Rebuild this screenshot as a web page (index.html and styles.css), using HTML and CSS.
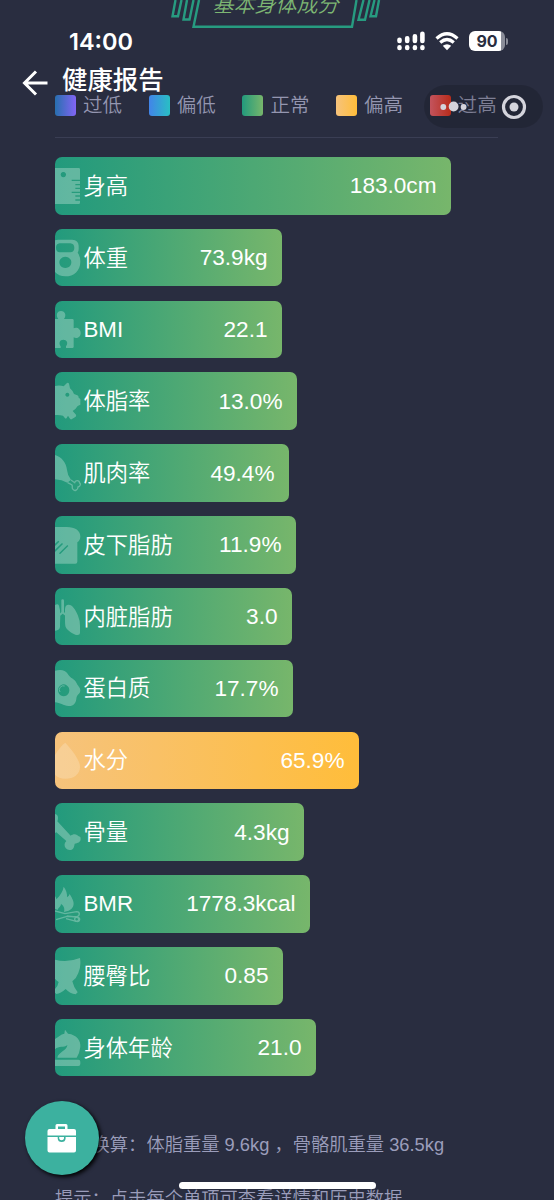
FILE: index.html
```html
<!DOCTYPE html>
<html lang="zh-CN">
<head>
    <meta charset="UTF-8">
    <meta name="viewport" content="width=device-width, initial-scale=1.0">
    <title>健康报告</title>
    <link rel="stylesheet" href="styles.css">
</head>
<body>

    <!-- Section banner -->
    <div class="banner">
        <svg class="banner-frame" width="212" height="30" viewBox="170 0 212 30">
            <path d="M200 0L194.500 26.800H353L357.500 0M176.500 0L173.500 16.300H179L182.500 0M188 0L184.500 19.500H190.500L194.500 0M364.500 0L359.500 19.800H366L370.500 0M375.500 0L371.500 16.300H377L380 0"/>
        </svg>
        <span class="banner-title">基本身体成分</span>
    </div>

    <!-- Legend -->
    <div class="legend">
        <div class="legend-item"><i class="swatch too-low"></i><span>过低</span></div>
        <div class="legend-item"><i class="swatch low"></i><span>偏低</span></div>
        <div class="legend-item"><i class="swatch normal"></i><span>正常</span></div>
        <div class="legend-item"><i class="swatch high"></i><span>偏高</span></div>
        <div class="legend-item"><i class="swatch too-high"></i><span>过高</span></div>
    </div>

    <!-- Body composition bars -->
    <div class="bars">
        <div class="bar normal" style="width: 396px">
            <svg class="icon" viewBox="0 0 78 114"><path fill-rule="evenodd" d="M0 3H71Q75 3 75 7V38H50V42H75V51H61V55H75V62H61V66H75V74H50V78H75V85H61V89H75V97H61V101H75V107Q75 111 71 111H0ZM25 15a8 8 0 1 0 .1 0Z"/></svg>
            <span class="label">身高</span><span class="value">183.0cm</span>
        </div>
        <div class="bar normal" style="width: 227px">
            <svg class="icon" viewBox="0 0 78 114"><path fill-rule="evenodd" d="M0 4Q3 2 10 2H52Q70 3 71 20V30Q71 36 68 41Q76 52 76 68C76 95 57 112 31 112C18 112 7 107 0 99ZM14 13Q3 14 3 26Q3 39 14 40H46Q58 39 58 27Q58 14 46 13ZM31 53A18 17 0 1 0 31.100 53Z"/></svg>
            <span class="label">体重</span><span class="value">73.9kg</span>
        </div>
        <div class="bar normal" style="width: 227px">
            <svg class="icon" viewBox="0 0 78 114"><path d="M0 27H10C2 17 5 3 18 3C31 3 35 17 27 27H52Q56 27 56 31V55C65 50 77 56 77 69C77 82 65 87 56 82V110Q56 114 52 114H33V109C41 98 35 89 25 89C14 89 10 100 17 109V114H0Z"/></svg>
            <span class="label latin">BMI</span><span class="value">22.1</span>
        </div>
        <div class="bar normal" style="width: 242px">
            <svg class="icon" viewBox="0 0 78 114"><path fill-rule="evenodd" d="M0 12C9 9 19 10 26 13L36 3Q40 1 42 5L45 19Q55 28 57 36L67 40Q71 41 71 47L76 51V68L68 72Q62 82 53 87L63 98Q65 102 61 105L51 111Q47 114 44 109L39 101L35 108Q32 112 29 107L24 101Q14 98 0 99ZM37 32a6 6 0 1 0 .1 0Z"/></svg>
            <span class="label">体脂率</span><span class="value">13.0%</span>
        </div>
        <div class="bar normal" style="width: 234px">
            <svg class="icon" viewBox="0 0 78 114"><path d="M0 3C21 9 34 28 36 48Q37 63 48 77L37 86Q21 77 0 76Z"/><path class="outline" d="M48 78L59 86C61 77 73 78 74 87C78 88 77 97 69 99C69 109 58 113 53 105C49 99 56 93 48 91L38 86"/></svg>
            <span class="label">肌肉率</span><span class="value">49.4%</span>
        </div>
        <div class="bar normal" style="width: 241px">
            <svg class="icon" viewBox="0 0 78 114"><path fill-rule="evenodd" d="M0 3H35C61 3 76 14 76 31Q76 43 67 49V107Q67 113 61 113H0V78L24 54L21 51L0 71V60L13 47L10 44L0 53ZM12 82L15 85L40 60L37 57Z"/></svg>
            <span class="label">皮下脂肪</span><span class="value">11.9%</span>
        </div>
        <div class="bar normal" style="width: 237px">
            <svg class="icon" viewBox="0 0 78 114"><path d="M0 21Q9 16 12 23Q16 36 16 50L15 80Q16 92 10 95Q4 98 0 98ZM19 7Q19 4 23 4Q27 4 27 8V42L32 47V54L23 47L15 54V47L19 42ZM30 36Q30 22 37 21C48 16 61 32 69 53Q75 67 75 84V105Q75 112 65 111C56 110 37 98 32 87Q30 82 30 65Z"/></svg>
            <span class="label">内脏脂肪</span><span class="value">3.0</span>
        </div>
        <div class="bar normal" style="width: 238px">
            <svg class="icon" viewBox="0 0 78 114"><path fill-rule="evenodd" d="M0 5C17 0 32 3 38 14C45 28 60 29 65 43C68 51 76 55 76 64C76 76 65 76 64 89C63 103 54 112 41 111C24 110 16 101 0 100ZM26 46A17 18 0 1 0 26.100 46Z"/><path class="thin" d="M15 69A12 12 0 0 1 29 51"/></svg>
            <span class="label">蛋白质</span><span class="value">17.7%</span>
        </div>
        <div class="bar high" style="width: 304px">
            <svg class="icon faint" viewBox="0 0 78 114"><path d="M31 5C43 18 75 55 75 77C75 99 57 113 31 113C18 113 7 109 0 101V42C10 25 21 12 31 5Z"/></svg>
            <span class="label">水分</span><span class="value">65.9%</span>
        </div>
        <div class="bar normal" style="width: 249px">
            <svg class="icon" viewBox="0 0 78 114"><path d="M0 3Q9 5 9 15Q9 20 7 25L47 68C53 63 61 62 66 66Q69 69 76 72C80 87 69 90 59 92C57 105 54 111 44 111C31 110 26 100 30 89L34 84L4 58L0 60Z"/></svg>
            <span class="label">骨量</span><span class="value">4.3kg</span>
        </div>
        <div class="bar normal" style="width: 255px">
            <svg class="icon" viewBox="0 0 78 114"><path d="M26 5Q37 19 36 37Q43 33 44 27C54 43 59 54 54 65Q51 72 41 77L27 81C31 66 23 61 18 56C18 66 9 67 8 75L0 71V33Q4 38 4 43C17 29 24 19 26 5Z"/><path class="outline" d="M0 78L30 86L65 80Q73 80 73 87Q73 93 66 95L36 94L3 104M35 93L63 96Q74 97 74 103Q74 111 64 109L33 101"/><circle class="outline" cx="65" cy="103" r="6"/></svg>
            <span class="label latin">BMR</span><span class="value">1778.3kcal</span>
        </div>
        <div class="bar normal" style="width: 228px">
            <svg class="icon" viewBox="0 0 78 114"><path d="M0 8Q37 18 75 3Q79 28 70 48Q65 63 52 73Q56 91 68 106L62 112Q45 110 32 96Q17 109 4 111L0 107V96Q9 87 11 75Q4 71 0 65Z"/></svg>
            <span class="label">腰臀比</span><span class="value">0.85</span>
        </div>
        <div class="bar normal" style="width: 261px">
            <svg class="icon" viewBox="0 0 78 114"><path d="M30 2L39 14C66 17 78 36 76 54Q74 72 65 86H7C9 70 37 64 37 48C26 57 12 49 0 61V30C10 24 17 16 28 14ZM0 92H70Q76 92 76 98V105Q76 111 70 111H0Z"/></svg>
            <span class="label">身体年龄</span><span class="value">21.0</span>
        </div>
    </div>

    <!-- Notes -->
    <div class="notes">
        <p>重量换算：体脂重量 9.6kg ，骨骼肌重量 36.5kg</p>
        <p>提示：点击每个单项可查看详情和历史数据</p>
    </div>

    <!-- Status bar and page title stay over the scrolled content -->
    <div class="top">
        <div class="status">
            <span class="time">14:00</span>
            <div class="status-icons">
                <svg width="28" height="20" viewBox="0 0 28 20">
                    <path d="M2.500 8.800V10M10.200 7.200V10M17.900 5.200V10M25.400 2.800V10M2.500 16.400V16.900M10.200 16.400V16.900M17.900 16.400V16.900M25.400 16.400V16.900" fill="none" stroke="#fff" stroke-width="4.600" stroke-linecap="round"/>
                </svg>
                <svg class="wifi" width="24" height="19" viewBox="0 0 24 19">
                    <path d="M1.500 6.500Q12-3 22.500 6.500M5.200 10.500Q12 4.500 18.800 10.500" fill="none" stroke="#fff" stroke-width="3.200"/>
                    <path d="M12 18.200L7.800 13.800Q12 10.500 16.200 13.800Z" fill="#fff"/>
                </svg>
                <div class="battery"><span>90</span></div>
            </div>
        </div>
        <div class="nav">
            <svg width="26" height="26" viewBox="0 0 26 26"><path d="M14 1.500L2.500 13L14 24.500M2.500 13H25.500" fill="none" stroke="#fff" stroke-width="3"/></svg>
            <h1>健康报告</h1>
        </div>
    </div>

    <div class="capsule">
        <svg width="119" height="43" viewBox="0 0 119 43">
            <g fill="#d4d4dc"><circle cx="19.300" cy="22" r="2.900"/><circle cx="29.600" cy="21.500" r="4.900"/><circle cx="39.600" cy="22" r="2.900"/><circle cx="90" cy="22" r="4.500"/></g>
            <circle cx="90" cy="22" r="10.500" fill="none" stroke="#d4d4dc" stroke-width="3.200"/>
        </svg>
    </div>

    <div class="fab">
        <svg width="30" height="30" viewBox="0 0 30 30">
            <path fill="#fff" fill-rule="evenodd" d="M8.500 6V2.500Q8.500 1 10 1H19Q20.500 1 20.500 2.500V6H27Q29 6 29 8V12.500H.5V8Q.5 6 2.500 6ZM11 6H18V3.500H11ZM.5 14H10.700V15.500Q11 19 14.700 19Q18.300 19 18.600 15.500V14H29V27.500Q29 29.500 27 29.500H2.500Q.5 29.500 .5 27.500ZM12.200 14H17V15.500Q16.700 17.300 14.600 17.300Q12.400 17.300 12.200 15.500Z"/>
        </svg>
    </div>

    <div class="home-indicator"></div>

</body>
</html>
```
FILE: styles.css
```css
/* Health report, dark theme */
* {
    box-sizing: border-box;
}

html {
    background-color: #292d40;
    overflow: hidden;
}

body {
    position: relative;
    height: 1200px;
    margin: 0;
    overflow: hidden;
    background-color: #292d40;
    font-family: "Liberation Sans", "Noto Sans CJK SC", sans-serif;
    font-weight: 350;
}

/* Banner */
.banner {
    display: grid;
    justify-content: center;
    height: 30px;
}

.banner-frame,
.banner-title {
    grid-area: 1 / 1;
}

.banner-frame {
    margin: 0 2px 0 -2px;
    fill: none;
    stroke: #279b80;
    stroke-width: 2.4;
}

.banner-title {
    justify-self: center;
    margin: -10px 3px 0 0;
    font-size: 21px;
    line-height: 30px;
    font-style: italic;
    color: #7db673;
}

/* Legend */
.legend {
    display: flex;
    height: 108px;
    margin: 0 56px 0 55px;
    padding-top: 65px;
    border-bottom: 1px solid #3a3e54;
}

.legend-item {
    display: flex;
    flex: 0 0 93.7px;
    align-items: center;
    gap: 7px;
    height: 21px;
    font-size: 19.5px;
    line-height: 21px;
    color: #9496b0;
    white-space: nowrap;
}

.swatch {
    width: 21px;
    height: 21px;
    border-radius: 3px;
}

.too-low {
    background: linear-gradient(90deg, #276fae, #8265f5);
}

.low {
    background: linear-gradient(90deg, #4284e8, #29bfc4);
}

.normal {
    background: linear-gradient(90deg, #229a7d, #77b66b);
}

.high {
    background: linear-gradient(90deg, #f6c37c, #ffbd3a);
}

.too-high {
    background: linear-gradient(90deg, #e5636e, #d93420);
}

/* Bars */
.bars {
    display: flex;
    flex-direction: column;
    gap: 14.23px;
    padding: 19px 0 0 55px;
}

.bar {
    display: flex;
    align-items: center;
    height: 57.6px;
    padding-right: 14.5px;
    border-radius: 7px;
    font-size: 22.3px;
    color: #fff;
    white-space: nowrap;
}

.icon {
    width: 26px;
    height: 38px;
    margin-right: 2.5px;
    fill: #fff;
    opacity: 0.28;
}

.icon.faint {
    opacity: 0.2;
}

.icon .outline,
.icon .thin {
    fill: none;
    stroke: #fff;
    stroke-width: 4;
}

.icon .thin {
    stroke-width: 3;
}

.label {
    padding-bottom: 4px;
}

.label.latin {
    padding: 1px 0 0;
}

.value {
    margin-left: auto;
    padding-top: 1px;
    font-size: 22.6px;
}

/* Notes */
.notes {
    padding: 55px 0 0 55px;
    font-size: 18.3px;
    line-height: 28px;
    color: #9b9dbb;
    white-space: nowrap;
}

.notes p {
    margin: 0 0 26px;
}

/* Status bar and title */
.top {
    position: absolute;
    top: 0;
    left: 0;
    width: 100%;
    padding-top: 27px;
    color: #fff;
}

.status {
    display: flex;
    align-items: center;
    justify-content: space-between;
    height: 28px;
    padding: 0 45px 0 69px;
}

.time {
    font-family: Inter, sans-serif;
    font-size: 23.5px;
    font-weight: 600;
}

.status-icons {
    display: flex;
    align-items: center;
}

.wifi {
    margin: 0 10px;
}

.battery {
    display: flex;
    align-items: center;
    width: 40px;
}

.battery span {
    width: 36px;
    height: 20px;
    border-radius: 6px;
    background: linear-gradient(90deg, #fff 90%, #898c98 90%);
    font-family: Inter, sans-serif;
    font-size: 16px;
    font-weight: 700;
    line-height: 20px;
    text-align: center;
    color: #292d40;
}

.battery::after {
    content: "";
    width: 2px;
    height: 7px;
    margin-left: 1px;
    border-radius: 0 2px 2px 0;
    background-color: #898c98;
}

.nav {
    display: flex;
    align-items: center;
    gap: 14px;
    height: 50px;
    padding: 5px 0 0 22px;
}

.nav h1 {
    margin: -10px 0 0;
    font-size: 25.4px;
    font-weight: 500;
}

/* Floating controls */
.capsule {
    position: absolute;
    top: 85px;
    left: 424px;
    width: 119px;
    height: 43px;
    border-radius: 22px;
    background-color: rgba(0, 0, 0, 0.15);
}

.fab {
    position: absolute;
    top: 1101px;
    left: 25px;
    display: flex;
    align-items: center;
    justify-content: center;
    width: 74px;
    height: 74px;
    border-radius: 50%;
    background-color: #3cb19f;
    box-shadow: 2px 2px 4px #000;
}

.home-indicator {
    position: absolute;
    top: 1182px;
    left: 179px;
    width: 197px;
    height: 7px;
    border-radius: 4px;
    background-color: #fff;
}
```
